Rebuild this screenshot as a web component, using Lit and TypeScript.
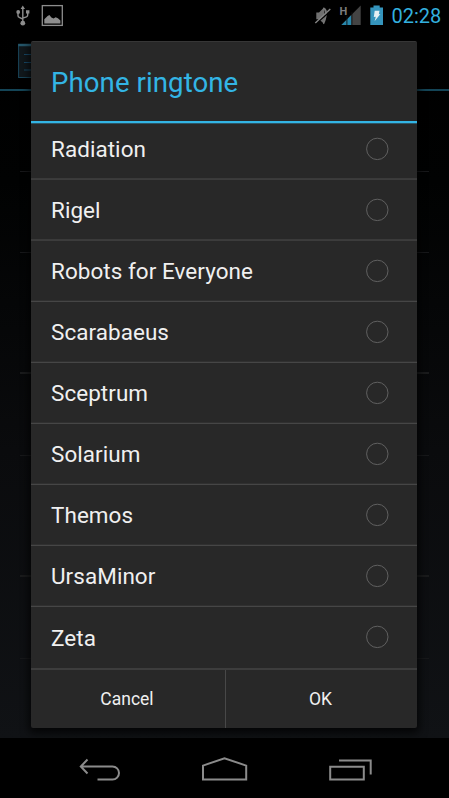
import { LitElement, html, css } from "lit";
import { customElement } from "lit/decorators.js";

const RINGTONES = ["Radiation", "Rigel", "Robots for Everyone", "Scarabaeus", "Sceptrum", "Solarium", "Themos", "UrsaMinor", "Zeta"];

@customElement("status-bar")
class StatusBar extends LitElement {
  static styles = css`
    :host { display: flex; height: 31px; background: #000; color: #33b0df; }
    svg { display: block; width: 390px; height: 31px; flex: none; }
    .clock { flex: 1; padding-left: 1.5px; font: 20px/32px Roboto, sans-serif; }
    .net { font: bold 11px Roboto, sans-serif; fill: #7d7d7d; }
  `;
  render() {
    return html`
      <svg viewBox="0 0 390 31">
        <g fill="none" stroke="#8d8d8d" stroke-width="1.4">
          <path d="M22.8 8V22M18 12.5v3.2q0 1.2 1.3 1.7l3.5 1.8M27.7 12v3q0 1.2-1.3 1.8l-3.6 1.4" />
        </g>
        <path fill="#8d8d8d" d="M22.8 5.5l2.2 3.6h-4.4zM26 10.2h3.4v3.4H26z" />
        <circle cx="18.2" cy="12" r="1.9" fill="#8d8d8d" />
        <circle cx="22.8" cy="23.2" r="2.4" fill="#8d8d8d" />
        <rect x="42.3" y="5.6" width="20" height="19.8" fill="none" stroke="#8d8d8d" stroke-width="1.3" />
        <path fill="#8d8d8d" d="M44.3 23.5v-4.3l3.3-3.3 1.8-1 2 2.5 2.2 1 2-1.2 2.3 1 2.5 2.3v3z" />
        <path fill="#707070" d="M316.3 12.5h2.7l5.3-5.3v16.8l-5.3-4.8h-2.7z" />
        <path d="M323 8.5q4 .5 2.6 7.500t-2.600 7.200" fill="none" stroke="#757575" stroke-width="2" />
        <path d="M315.3 24.3L331.3 10.3" stroke="#000" stroke-width="1.5" />
        <path d="M315.3 22.9L330.3 9" stroke="#858585" stroke-width="1.4" />
        <text class="net" x="339.4" y="14.6">H</text>
        <path fill="#444" d="M360.7 5.6V25h-19.3z" />
        <path fill="#2787ac" d="M351.4 15V25h-10z" />
        <path d="M346.9 16v9M351.9 12v13" stroke="#101010" stroke-width=".9" />
        <path fill="#3595bd" d="M373.5 5.4h6.2v2h3.3V25h-12.7V7.4h3.2z" />
        <path fill="#e4f0f4" d="M374.7 10.8h4.8l-.7 3.500 1.600-.3-5.800 7.200 1.200-4.400-2 .2z" />
      </svg>
      <span class="clock">02:28</span>
    `;
  }
}

@customElement("settings-backdrop")
class SettingsBackdrop extends LitElement {
  static styles = css`
    :host { display: flex; flex-direction: column; background: linear-gradient(#000 0, #010202 150px, #0a0b0d 420px, #101215 100%); }
    .bar { height: 58px; border-bottom: 2px solid #144557; padding-left: 18px; display: flex; align-items: center; }
    svg { width: 34px; height: 36px; margin-top: 2px; }
    .row { margin: 0 20px; border-bottom: 1px solid #17181a; box-sizing: border-box; }
    .strong { border-bottom: 2px solid #1a1b1c; }
    .a { height: 81px; } .b { height: 81px; } .c { height: 121px; }
    .d { height: 82px; } .e { height: 121px; } .f { height: 82px; }
  `;
  render() {
    return html`
      <div class="bar">
        <svg viewBox="0 0 34 36">
          <rect x=".6" y="1.5" width="32" height="33" fill="#11181c" stroke="#1a465a" />
          <path d="M.2 2h32" stroke="#25566a" stroke-width="2.4" />
          <path d="M6 11.500h20M6 19.500h20M6 27h20" stroke="#174a69" />
        </svg>
      </div>
      <div class="row a"></div><div class="row b"></div><div class="row strong c"></div>
      <div class="row d"></div><div class="row strong e"></div><div class="row f"></div>
    `;
  }
}

@customElement("ringtone-dialog")
class RingtoneDialog extends LitElement {
  static styles = css`
    :host {
      display: flex; flex-direction: column; box-sizing: border-box; overflow: hidden;
      background: #282828; border-radius: 2px; font-family: Roboto, sans-serif; color: #f0f0f0;
      border-top: 1px solid #363636; box-shadow: 0 3px 8px 2px rgba(0, 0, 0, .75);
    }
    h1 { margin: 0; height: 79px; flex: none; padding-left: 20px; font-size: 27.6px; font-weight: 400; line-height: 81px; letter-spacing: .08px; color: #33b5e5; border-bottom: 2px solid #33b5e5; box-shadow: 0 1px #2b5666; }
    .list { flex: 1; min-height: 0; overflow: hidden; margin-top: 1px; }
    .item { display: flex; align-items: center; justify-content: space-between; box-sizing: border-box; height: 61px; padding: 0 28px 0 20px; border-bottom: 1px solid #464646; box-shadow: inset 0 -1px #303030; font-size: 22.45px; letter-spacing: .07px; }
    .item:first-child { margin-top: -5px; }
    .item:nth-child(-n + 2) { border-bottom-color: #3c3c3c; box-shadow: inset 0 -1px #3a3a3a; }
    .item:last-child { border-bottom: 0; box-shadow: none; }
    .radio { width: 24px; height: 24px; margin-top: -1px; fill: none; stroke: #606060; stroke-width: 1; }
    .buttons { display: flex; box-sizing: border-box; height: 60px; flex: none; border-top: 2px solid #3d3d3d; }
    .button { width: 194px; box-sizing: border-box; font-size: 17.5px; line-height: 59px; text-align: center; padding-right: 2px; }
    .button + .button { flex: 1; border-left: 1px solid #484848; }
  `;
  render() {
    return html`
      <h1><span>Phone ringtone</span></h1>
      <div class="list">
        ${RINGTONES.map((name) => html`
          <div class="item">
            <span>${name}</span>
            <svg class="radio" viewBox="0 0 24 24"><circle cx="12.3" cy="11.9" r="10.7" /></svg>
          </div>`)}
      </div>
      <div class="buttons"><div class="button">Cancel</div><div class="button">OK</div></div>
    `;
  }
}

@customElement("nav-bar")
class NavBar extends LitElement {
  static styles = css`
    :host { display: flex; height: 60px; background: #000; padding: 0 37px; justify-content: space-between; }
    svg { width: 125px; height: 60px; fill: none; stroke: #8b8b8b; stroke-width: 2; }
  `;
  render() {
    return html`
      <svg viewBox="37 738 125 60"><path d="M87.500 759.500l-6.700 7 6.700 7M81 766.500h31.500a6.500 6.500 0 0 1 0 13H97.500" /></svg>
      <svg viewBox="162 738 125 60"><path d="M203 779.400v-13.800l21.500-7.400 21.700 7.400v13.800z" /></svg>
      <svg viewBox="287 738 125 60"><path d="M330.200 766.700h33.600v12.800h-33.600zM339 760.500h31.700v14" /></svg>
    `;
  }
}

@customElement("app-root")
class AppRoot extends LitElement {
  static styles = css`
    :host { display: flex; flex-direction: column; width: 449px; height: 798px; background: #000; overflow: hidden; }
    .stage { display: grid; flex: 1; min-height: 0; }
    settings-backdrop, ringtone-dialog { grid-area: 1 / 1; }
    ringtone-dialog { margin: 10px 32px 10px 31px; height: 687px; }
  `;
  render() {
    return html`
      <status-bar></status-bar>
      <div class="stage"><settings-backdrop></settings-backdrop><ringtone-dialog></ringtone-dialog></div>
      <nav-bar></nav-bar>
    `;
  }
}
